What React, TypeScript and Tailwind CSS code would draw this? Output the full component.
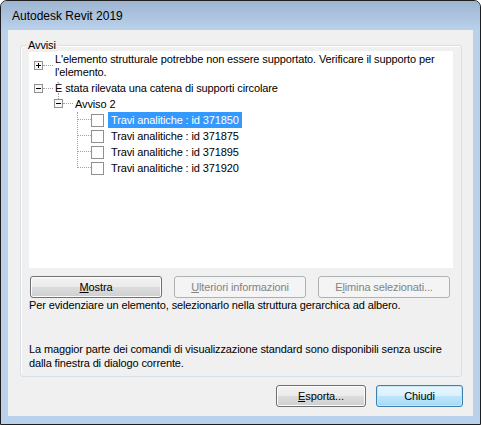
import React from "react";

function Expander({ open }: { open: boolean }) {
  return (
    <svg width="9" height="9" viewBox="0 0 9 9" className="block">
      <rect x="0.5" y="0.5" width="8" height="8" fill="#f7f7f7" stroke="#919191" />
      <line x1="2" y1="4.5" x2="7" y2="4.5" stroke="#000" />
      {!open && <line x1="4.5" y1="2" x2="4.5" y2="7" stroke="#000" />}
    </svg>
  );
}

function Btn({
  children,
  w,
  disabled,
  dflt,
}: {
  children: React.ReactNode;
  w: string;
  disabled?: boolean;
  dflt?: boolean;
}) {
  if (disabled) {
    return (
      <div
        className={`${w} h-[22px] rounded-[3px] border border-[#adb2b5] bg-[#f4f4f4] flex items-center justify-center text-[#838383]`}
      >
        {children}
      </div>
    );
  }
  if (dflt) {
    return (
      <div
        className={`${w} h-[22px] rounded-[3px] border border-[#3c7fb1] bg-[linear-gradient(#eaf6fd_0%,#d9f0fc_50%,#bee6fd_50%,#a7d9f5_100%)] shadow-[inset_0_0_0_1px_#c5e8f8] flex items-center justify-center text-black`}
      >
        {children}
      </div>
    );
  }
  return (
    <div
      className={`${w} h-[22px] rounded-[3px] border border-[#707070] bg-[linear-gradient(#f2f2f2_0%,#ebebeb_50%,#dddddd_50%,#cfcfcf_100%)] shadow-[inset_0_0_0_1px_#fcfcfc] flex items-center justify-center text-black`}
    >
      {children}
    </div>
  );
}

function LeafRow({ label, selected }: { label: string; selected?: boolean }) {
  return (
    <div className="flex h-[16px] items-center">
      <div className="relative w-[62px] h-full shrink-0">
        <div className="absolute left-[49px] top-[7px] w-[13px] border-t border-dotted border-[#a0a0a0]" />
      </div>
      <div className="w-[13px] h-[13px] border border-[#8e8f8f] bg-white shrink-0" />
      <div
        className={`ml-[4px] h-[16px] px-[3px] flex items-center whitespace-nowrap ${
          selected ? "bg-[#3399ff] text-white" : "text-black"
        }`}
      >
        {label}
      </div>
    </div>
  );
}

export default function App() {
  return (
    <div className="w-[481px] h-[425px] bg-white">
      <div className="w-[481px] h-[425px] border border-[#1e1e1e] rounded-t-[7px] bg-[#b9d1ea] flex flex-col font-['Liberation_Sans',Arial,sans-serif] text-[11px] text-black overflow-hidden">
        <div className="h-[29px] shrink-0 rounded-t-[6px] bg-[linear-gradient(#9db5d1,#b9d1ea)] flex items-center pl-[11px] pt-[1px] text-[12px]">
          Autodesk Revit 2019
        </div>
        <div className="mx-[7px] mb-[8px] flex-1 bg-[#f0f0f0] flex flex-col tracking-[-0.12px]">
          <div className="relative ml-[12px] mr-[11px] mt-[15px] h-[332px] rounded-[3px] border border-[#d5dfe5] shadow-[inset_1px_1px_0_#ffffff] flex flex-col pl-[8px] pr-[8px] pt-[5px]">
            <div className="absolute left-[5px] top-[-8px] px-[2px] bg-[#f0f0f0] leading-[14px]">
              Avvisi
            </div>
            <div className="h-[217px] bg-white pt-[1px] flex flex-col">
              <div className="flex h-[28px]">
                <div className="relative w-[26px] shrink-0 h-full">
                  <div className="absolute left-[5px] top-[9px]">
                    <Expander open={false} />
                  </div>
                  <div className="absolute left-[14px] top-[13px] w-[10px] border-t border-dotted border-[#a0a0a0]" />
                </div>
                <div className="leading-[13px] pt-[1px] whitespace-nowrap">
                  L'elemento strutturale potrebbe non essere supportato. Verificare il supporto per
                  <br />
                  l'elemento.
                </div>
              </div>
              <div className="flex h-[16px] items-center">
                <div className="relative w-[26px] shrink-0 h-full">
                  <div className="absolute left-[5px] top-[4px]">
                    <Expander open={true} />
                  </div>
                  <div className="absolute left-[14px] top-[8px] w-[10px] border-t border-dotted border-[#a0a0a0]" />
                  <div className="absolute left-[29px] top-[13px] h-[6px] border-l border-dotted border-[#a0a0a0]" />
                </div>
                <div className="whitespace-nowrap">È stata rilevata una catena di supporti circolare</div>
              </div>
              <div className="flex h-[16px] items-center">
                <div className="relative w-[46px] shrink-0 h-full">
                  <div className="absolute left-[25px] top-[3px]">
                    <Expander open={true} />
                  </div>
                  <div className="absolute left-[34px] top-[7px] w-[10px] border-t border-dotted border-[#a0a0a0]" />
                </div>
                <div className="whitespace-nowrap">Avviso 2</div>
              </div>
              <div className="relative flex flex-col">
                <div className="absolute left-[48px] top-0 h-[56px] border-l border-dotted border-[#a0a0a0]" />
                <LeafRow label="Travi analitiche : id 371850" selected />
                <LeafRow label="Travi analitiche : id 371875" />
                <LeafRow label="Travi analitiche : id 371895" />
                <LeafRow label="Travi analitiche : id 371920" />
              </div>
            </div>
            <div className="mt-[8px] ml-[1px] flex gap-[12px]">
              <Btn w="w-[132px]">
                <span>
                  <span className="underline">M</span>ostra
                </span>
              </Btn>
              <Btn w="w-[132px]" disabled>
                <span>
                  <span className="underline">U</span>lteriori informazioni
                </span>
              </Btn>
              <Btn w="w-[132px]" disabled>
                <span>
                  E<span className="underline">l</span>imina selezionati...
                </span>
              </Btn>
            </div>
            <div className="leading-[14px] whitespace-nowrap">
              Per evidenziare un elemento, selezionarlo nella struttura gerarchica ad albero.
            </div>
            <div className="mt-[30px] leading-[14px] whitespace-nowrap">
              La maggior parte dei comandi di visualizzazione standard sono disponibili senza uscire
              <br />
              dalla finestra di dialogo corrente.
            </div>
          </div>
          <div className="mt-[8px] mr-[10px] flex justify-end gap-[10px]">
            <Btn w="w-[90px]">
              <span>
                <span className="underline">E</span>sporta...
              </span>
            </Btn>
            <Btn w="w-[87px]" dflt>
              Chiudi
            </Btn>
          </div>
        </div>
      </div>
    </div>
  );
}
